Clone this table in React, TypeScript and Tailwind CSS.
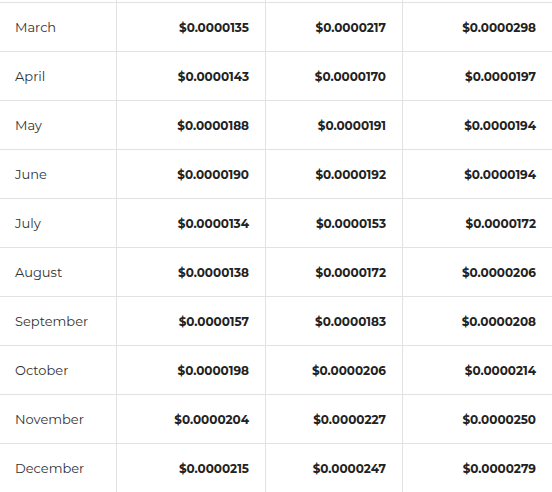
const rows: [string, string, string, string][] = [
  ["March", "$0.0000135", "$0.0000217", "$0.0000298"],
  ["April", "$0.0000143", "$0.0000170", "$0.0000197"],
  ["May", "$0.0000188", "$0.0000191", "$0.0000194"],
  ["June", "$0.0000190", "$0.0000192", "$0.0000194"],
  ["July", "$0.0000134", "$0.0000153", "$0.0000172"],
  ["August", "$0.0000138", "$0.0000172", "$0.0000206"],
  ["September", "$0.0000157", "$0.0000183", "$0.0000208"],
  ["October", "$0.0000198", "$0.0000206", "$0.0000214"],
  ["November", "$0.0000204", "$0.0000227", "$0.0000250"],
  ["December", "$0.0000215", "$0.0000247", "$0.0000279"],
];

const cols = "grid grid-cols-[116px_149px_137px_150px]";
const priceCell =
  "flex items-center justify-end pr-4 pt-[2px] border-l border-[#e2e2e2] text-[12px] font-bold text-[#222]";

export default function App() {
  return (
    <main className="w-[552px] h-[492px] overflow-hidden bg-white font-['Montserrat','Open_Sans',sans-serif]">
      {/* tail of the row above, scrolled out of view */}
      <div className={`${cols} h-[3px] border-b border-[#e2e2e2]`}>
        <div />
        <div className="border-l border-[#e2e2e2]" />
        <div className="border-l border-[#e2e2e2]" />
        <div className="border-l border-[#e2e2e2]" />
      </div>
      {rows.map(([month, low, avg, high]) => (
        <div key={month} className={`${cols} h-[49px] border-b border-[#e2e2e2]`}>
          <div className="flex items-center pl-[15px] pt-[2px] text-[13px] text-[#333]">{month}</div>
          <div className={priceCell}>{low}</div>
          <div className={priceCell}>{avg}</div>
          <div className={priceCell}>{high}</div>
        </div>
      ))}
    </main>
  );
}
